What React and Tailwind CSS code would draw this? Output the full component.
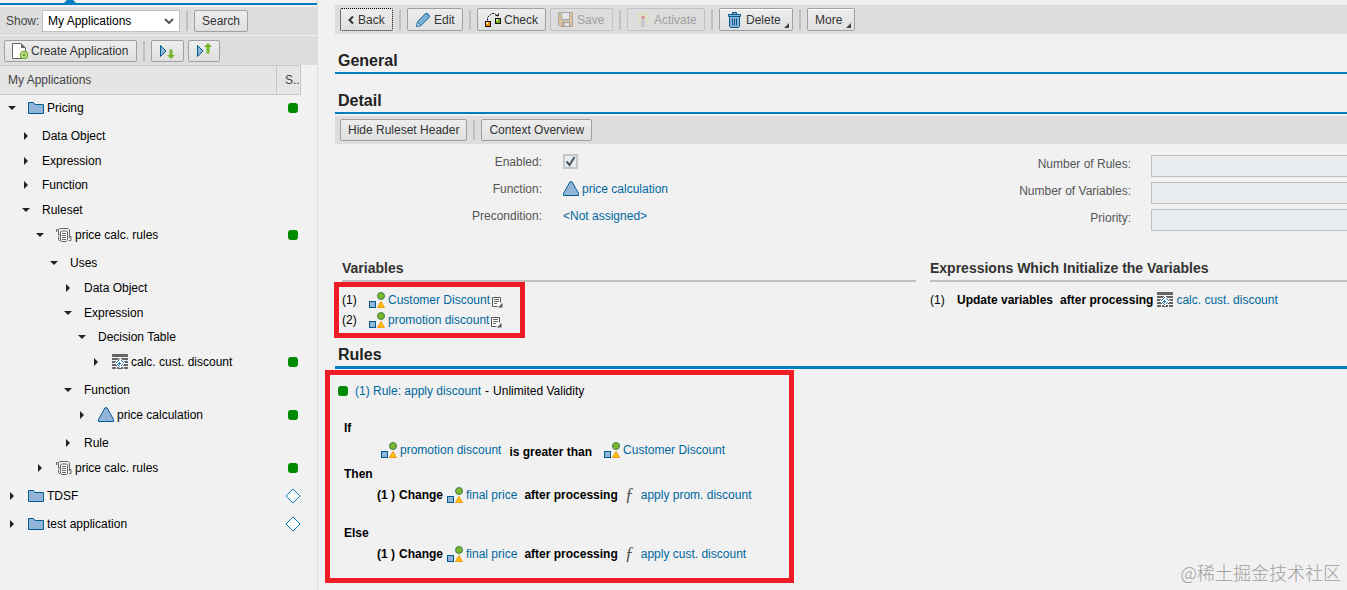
// Rule workbench: application tree on the left, ruleset detail on the right
import { clsx } from 'clsx';

/* ---------- icons ---------- */

function FolderIcon() {
  return (
    <svg width="16" height="16" viewBox="0 0 16 16" className="shrink-0">
      <path d="M.5 2.5h5l1.5 2h8.5v9H.5z" fill="#91b4d8" stroke="#005b8f" />
    </svg>
  );
}

function RulesetIcon() {
  return (
    <svg width="16" height="16" viewBox="0 0 16 16" className="shrink-0" fill="none" stroke="#666">
      <path d="M.5 5V2.500h2M2.500 2.500l1-1h8.500l1.500 1.500v8M2.500 3v5h2" />
      <path d="M4.500 13V5l1-1h5l1 1v8.500l-1 1h-5z" fill="#f8f8f8" />
      <path d="M2.500 9.500v3l1.500 1.500M13.500 9.500h1.500v4h-2" />
      <path d="M6 6.500h4M6 8.500h4M6 10.500h4M6 12.500h4" />
    </svg>
  );
}

function DecisionTableIcon() {
  return (
    <svg width="16" height="16" viewBox="0 0 16 16" className="shrink-0" shapeRendering="crispEdges">
      <path d="M0 0h16v3H0zM0 4h16v2H0zM0 7h16v2H0zM0 10h16v2H0zM0 13h4v2H0zM5 13h6v2H5zM12 13h4v2h-4z" fill="#666" />
      <path d="M7 4h2v1h1v1h1v1h1v1h1v2h-1v1h-1v1h-1v1H9v1H7v-1H6v-1H5v-1H4v-1H3V8h1V7h1V6h1V5h1z" fill="#fff" />
      <path d="M7 5h1v1H7zM6 6h1v1H6zM9 6h1v1H9zM5 7h1v1H5zM10 7h1v1h-1zM4 8h1v1H4zM11 8h1v1h-1zM5 10h1v1H5zM10 10h1v1h-1zM6 11h1v1H6zM9 11h1v1H9zM7 12h1v1H7zM7 8h1v3H7zM6 9h3v1H6z" fill="#1f78ad" />
    </svg>
  );
}

function FunctionIcon() {
  return (
    <svg width="16" height="16" viewBox="0 0 16 16" className="shrink-0">
      <path d="M7 .8h2l6.500 11.700v2H.5v-2z" fill="#91b4d8" stroke="#005b8f" />
    </svg>
  );
}

function VariableIcon() {
  return (
    <svg width="16" height="16" viewBox="0 0 16 16" className="shrink-0">
      <circle cx="12" cy="4" r="3.500" fill="#7cb82a" stroke="#3f8050" />
      <rect x=".5" y="9.500" width="6" height="6" fill="#91b4d8" stroke="#005b8f" />
      <path d="M12 9.500l3.500 6h-7z" fill="#fdc300" stroke="#f59a1b" />
    </svg>
  );
}

function NoteIcon() {
  return (
    <svg width="11" height="11" viewBox="0 0 11 11" className="shrink-0 self-end ml-[2px] mb-[2px]">
      <path d="M5.500 9.500h-5v-9h8v5" fill="#fff" stroke="#555" />
      <path d="M2 2.500h5M2 4.500h5M2 6.500h3" stroke="#666" />
      <path d="M10.500 6v4.500H6z" fill="#555" />
    </svg>
  );
}

function NewDocIcon() {
  return (
    <svg width="16" height="16" viewBox="0 0 16 16" className="shrink-0">
      <path d="M.5.5h8.500l4.500 4.500v10.500H.5z" fill="#fff" stroke="#666" />
      <path d="M9 .5V5h4.500z" fill="#666" />
      <circle cx="12" cy="12" r="3.500" fill="#fff" stroke="#6eaa14" strokeWidth="1.500" />
      <path d="M12 10v4M10 12h4" stroke="#6eaa14" strokeWidth="1.500" />
    </svg>
  );
}

function TransportIcon({ up }) {
  return (
    <svg width="16" height="16" viewBox="0 0 16 16" className="shrink-0">
      <path d="M1.500 2.500l5.500 5.500-5.500 5.500z" fill="#91b4d8" stroke="#005b8f" />
      <path d={up ? 'M12 0l4 4h-2.500v6.500h-3V4H8z' : 'M12 16l-4-4h2.500V6.500h3V12H16z'} fill="#76b82a" />
    </svg>
  );
}

function PencilIcon() {
  return (
    <svg width="16" height="16" viewBox="0 0 16 16" className="shrink-0">
      <path d="M1.500 14.500l1-4.500 8-8.500h2l2 2v1.500l-8.500 8.500z" fill="#5fa2cc" stroke="#1c6f9f" />
      <path d="M4 10.500l7-7.500M5.500 12l7-7.500" stroke="#a9cde6" />
      <path d="M1.500 14.500l1-4 3.500 3z" fill="#d7e8f2" stroke="#1c6f9f" strokeWidth=".7" />
    </svg>
  );
}

function CheckIcon() {
  return (
    <svg width="16" height="16" viewBox="0 0 16 16" className="shrink-0">
      <path d="M2.500 8.500V5.500L5 3l2-1.500h3l2.500 3" fill="none" stroke="#111" strokeDasharray="2 1" />
      <path d="M10.500 3.500h3v-2" fill="none" stroke="#111" />
      <rect x=".5" y="9.500" width="5" height="5" fill="#f28c00" stroke="#111" />
      <rect x="1" y="10" width="2" height="2" fill="#ffe08a" />
      <rect x="10.500" y="6.500" width="5" height="5" fill="#7db32a" stroke="#111" />
      <rect x="11" y="7" width="2" height="2" fill="#cde89b" />
    </svg>
  );
}

function SaveIcon() {
  return (
    <svg width="16" height="16" viewBox="0 0 16 16" className="shrink-0 opacity-50">
      <path d="M.5.5h14v14H2L.5 13z" fill="#e9a44f" stroke="#777" />
      <rect x="3.500" y=".5" width="8" height="7" fill="#f0f0f4" stroke="#777" />
      <path d="M3 8.500h9" stroke="#999" />
      <rect x="4.500" y="10.500" width="7" height="4" fill="#eee" stroke="#666" />
      <rect x="5" y="11" width="2" height="3.500" fill="#888" />
    </svg>
  );
}

function ActivateIcon() {
  return (
    <svg width="16" height="16" viewBox="0 0 16 16" className="shrink-0 opacity-60">
      <path d="M8 0v3M3.500 1.500l2.500 3M12.500 1.500L10 4.500M2 6.500h3M11 6.500h3M3.500 11l2.500-2.500M12.500 11L10 8.500" stroke="#e6e04a" />
      <rect x="6.500" y="4" width="3" height="3" fill="#dd5f5f" />
      <path d="M7 7v8M9 7v8" stroke="#8ea3bb" />
    </svg>
  );
}

function TrashIcon() {
  return (
    <svg width="16" height="16" viewBox="0 0 16 16" className="shrink-0" stroke="#005b8f">
      <path d="M5.500 2.500V.5h4v2M1.500 2.500h12v2h-12z" fill="#91b4d8" />
      <path d="M2.500 4.500h10v10l-1 1h-8l-1-1z" fill="#91b4d8" />
      <path d="M5.500 6.500v7M7.500 6.500v7M9.500 6.500v7" fill="none" />
    </svg>
  );
}

function BackIcon() {
  return (
    <svg width="7" height="10" viewBox="0 0 7 10" className="shrink-0" fill="none">
      <path d="M5 1.500L1.500 5 5 8.500" stroke="#333" strokeWidth="2" />
    </svg>
  );
}

// Small corner mark on buttons which open a menu
function MenuCorner() {
  return (
    <svg width="5" height="5" viewBox="0 0 5 5" className="absolute right-[3px] bottom-[2px]">
      <path d="M5 0v5H0z" fill="#444" />
    </svg>
  );
}

function StatusIcon({ status }) {
  return (
    <svg width="16" height="16" viewBox="0 0 16 16" className="shrink-0" role="img" aria-label={status}>
      {status === 'active' ? (
        <rect x="3" y="3" width="10" height="10" rx="3" fill="#008a00" />
      ) : (
        <path d="M8 1l7 7-7 7-7-7z" fill="#fff" stroke="#0a7fc0" />
      )}
    </svg>
  );
}

/* ---------- toolbar parts ---------- */

function Button({ icon, children, menu, disabled, focused, className }) {
  return (
    <button
      type="button"
      disabled={disabled}
      className={clsx(
        'relative flex items-center gap-[3px] pl-[7px] border rounded-[2px] text-xs whitespace-nowrap',
        menu ? 'pr-[11px]' : 'pr-[7px]',
        disabled ? 'border-[#c2c2c2] text-[#a0a0a0]' : 'text-[#333] bg-linear-to-b from-[#ededed] to-[#e0e0e0]',
        !disabled && (focused ? 'border-dotted border-black' : 'border-[#a0a0a0]'),
        menu && 'shadow-[inset_0_1px_0_#fff]',
        className
      )}
    >
      {icon}
      {children}
      {menu && <MenuCorner />}
    </button>
  );
}

function Separator() {
  return <div className="w-[2px] h-5 mx-1.5 bg-[#c0c0c0]" />;
}

function SectionTitle({ children }) {
  return (
    <h2 className="pt-4 pl-[3px] text-base leading-[22px] font-bold text-[#222] border-b-2 border-[#007cc0]">
      {children}
    </h2>
  );
}

function Link({ children }) {
  return <a href="#" className="text-[#00679e] whitespace-nowrap hover:underline">{children}</a>;
}

/* ---------- tree ---------- */

const tree = [
  { label: 'Pricing', level: 0, open: true, icon: FolderIcon, status: 'active', height: 'h-7' },
  { label: 'Data Object', level: 1, height: 'h-[25px]' },
  { label: 'Expression', level: 1, height: 'h-6' },
  { label: 'Function', level: 1, height: 'h-[25px]' },
  { label: 'Ruleset', level: 1, open: true, height: 'h-[25px]' },
  { label: 'price calc. rules', level: 2, open: true, icon: RulesetIcon, status: 'active', height: 'h-7' },
  { label: 'Uses', level: 3, open: true, height: 'h-[25px]' },
  { label: 'Data Object', level: 4, height: 'h-[25px]' },
  { label: 'Expression', level: 4, open: true, height: 'h-6' },
  { label: 'Decision Table', level: 5, open: true, height: 'h-[25px]' },
  { label: 'calc. cust. discount', level: 6, icon: DecisionTableIcon, status: 'active', height: 'h-7' },
  { label: 'Function', level: 4, open: true, height: 'h-[25px]' },
  { label: 'price calculation', level: 5, icon: FunctionIcon, status: 'active', height: 'h-7' },
  { label: 'Rule', level: 4, height: 'h-[25px]' },
  { label: 'price calc. rules', level: 2, icon: RulesetIcon, status: 'active', height: 'h-7' },
  { label: 'TDSF', level: 0, icon: FolderIcon, status: 'new', height: 'h-7' },
  { label: 'test application', level: 0, icon: FolderIcon, status: 'new', height: 'h-7' },
];

const INDENT = 14;

function TreeRow({ row }) {
  const Icon = row.icon;
  return (
    <tr className={row.height}>
      <td className="p-0 align-top">
        <div className="flex items-center pt-[3px] leading-5" style={{ paddingLeft: row.level * INDENT }}>
          <button type="button" aria-label={row.open ? 'Collapse' : 'Expand'} className="w-7 h-4 pl-2 shrink-0 flex items-center">
            <svg width="8" height="8" viewBox="0 0 8 8" fill="#222">
              <path d={row.open ? 'M0 2h8L4 6z' : 'M2 0l4 4-4 4z'} />
            </svg>
          </button>
          {Icon && <Icon />}
          <span className={clsx('whitespace-nowrap text-black', Icon && 'pl-[3px]')}>{row.label}</span>
        </div>
      </td>
      <td className="p-0 align-top">
        {row.status && (
          <div className="flex items-center h-[23px] pt-[3px] pl-2">
            <StatusIcon status={row.status} />
          </div>
        )}
      </td>
    </tr>
  );
}

function Sidebar() {
  return (
    <aside className="w-[318px] shrink-0 border-r border-[#dcdcdc]">
      <svg width="12" height="3" viewBox="0 0 12 3" className="ml-16">
        <path d="M0 3l3-3h6l3 3z" fill="#007cc0" />
      </svg>
      <div className="h-[2px] mb-[2px] bg-[#007cc0]" />

      <div className="flex items-center h-7 pl-1.5 bg-[#ddd]">
        <label htmlFor="show" className="w-9 text-[#444]">Show:</label>
        <div className="relative">
          <select id="show" className="appearance-none w-[138px] h-[22px] pl-[5px] bg-white border border-[#c0c0c0] text-black">
            <option>My Applications</option>
          </select>
          <svg width="10" height="6" viewBox="0 0 10 6" className="absolute right-1.5 top-2 pointer-events-none" fill="none">
            <path d="M1 1l4 4 4-4" stroke="#555" strokeWidth="2" />
          </svg>
        </div>
        <Separator />
        <Button className="h-[22px]">Search</Button>
      </div>

      <div className="flex items-center h-[29px] mt-px pl-1 bg-[#ddd]">
        <Button className="h-[22px] w-[133px]" icon={<NewDocIcon />}>Create Application</Button>
        <Separator />
        <Button className="h-[22px] w-[33px] mr-1" icon={<TransportIcon />} />
        <Button className="h-[22px]" icon={<TransportIcon up />} />
      </div>

      <table className="w-[301px] table-fixed border-collapse">
        <thead>
          <tr className="h-[29px] bg-[#e5e5e5] text-left text-[#444]">
            <th className="p-0 pl-2 pb-px font-normal border-y border-[#c8c8c8]">My Applications</th>
            <th className="w-6 p-0 pl-2 pb-px font-normal border border-[#c8c8c8] overflow-hidden">S..</th>
          </tr>
        </thead>
        <tbody>
          {tree.map((row, i) => <TreeRow key={i} row={row} />)}
        </tbody>
      </table>
    </aside>
  );
}

/* ---------- detail ---------- */

const counters = [
  { id: 'rules', label: 'Number of Rules:' },
  { id: 'variables', label: 'Number of Variables:' },
  { id: 'priority', label: 'Priority:' },
];

function Field({ label, htmlFor, children }) {
  return (
    <div className="flex items-center h-[27px]">
      <label htmlFor={htmlFor} className="w-[207px] mr-[21px] text-right text-[#555]">{label}</label>
      {children}
    </div>
  );
}

function Variable({ name }) {
  return (
    <span className="flex items-center gap-[3px] font-normal">
      <VariableIcon />
      <Link>{name}</Link>
    </span>
  );
}

function Change({ target, expression }) {
  return (
    <div className="flex items-center h-5 mt-px pl-[47px] font-bold whitespace-nowrap">
      <span className="mr-1">(1 )</span>
      <span className="mr-1">Change</span>
      <Variable name={target} />
      <span className="mx-[7px]">after processing</span>
      <span className="w-4 font-['Liberation_Serif',serif] text-lg leading-5 italic font-normal text-[#555]">ƒ</span>
      <span className="font-normal"><Link>{expression}</Link></span>
    </div>
  );
}

function RuleCard() {
  return (
    <div className="w-[469px] mt-px -ml-[10px] pt-1.5 pb-[14px] border-[5px] border-[#ee1c25] text-black">
      <div className="flex items-center h-5 pl-[5px]">
        <StatusIcon status="active" />
        <span className="ml-1"><Link>(1) Rule: apply discount</Link></span>
        <span className="mx-1">-</span>
        <span>Unlimited Validity</span>
      </div>

      <div className="mt-[17px] pl-[14px] leading-5 font-bold">If</div>
      <div className="flex items-end h-5 mt-[2px] pl-[51px] leading-5">
        <Variable name="promotion discount" />
        <span className="ml-2 mr-3 leading-4 font-bold">is greater than</span>
        <Variable name="Customer Discount" />
      </div>

      <div className="mt-1 pl-[14px] leading-5 font-bold">Then</div>
      <Change target="final price" expression="apply prom. discount" />

      <div className="mt-[18px] pl-[14px] leading-5 font-bold">Else</div>
      <Change target="final price" expression="apply cust. discount" />
    </div>
  );
}

function Detail() {
  return (
    <main className="flex-1 min-w-0 pt-[5px] pl-[17px]">
      <div className="flex items-center h-[29px] pl-[5px] bg-[#ddd]">
        <Button className="h-[23px] w-[53px]" focused icon={<BackIcon />}>Back</Button>
        <Separator />
        <Button className="h-[23px] w-14" icon={<PencilIcon />}>Edit</Button>
        <Separator />
        <Button className="h-[23px] w-[69px] mr-1" icon={<CheckIcon />}>Check</Button>
        <Button className="h-[23px] w-[63px]" disabled icon={<SaveIcon />}>Save</Button>
        <Separator />
        <Button className="h-[23px] w-[78px]" disabled icon={<ActivateIcon />}>Activate</Button>
        <Separator />
        <Button className="h-[23px] w-[74px]" menu icon={<TrashIcon />}>Delete</Button>
        <Separator />
        <Button className="h-[23px] w-12" menu>More</Button>
      </div>

      <SectionTitle>General</SectionTitle>
      <SectionTitle>Detail</SectionTitle>

      <div className="flex items-center h-7 mt-[2px] pl-[5px] bg-[#ddd]">
        <Button className="h-[22px]">Hide Ruleset Header</Button>
        <Separator />
        <Button className="h-[22px]">Context Overview</Button>
      </div>

      {/* Header fields */}
      <div className="grid grid-cols-[595fr_417fr]">
        <div className="pt-1">
          <Field label="Enabled:" htmlFor="enabled">
            <span className="grid">
              <input
                id="enabled"
                type="checkbox"
                defaultChecked
                className="appearance-none col-start-1 row-start-1 w-[15px] h-[15px] bg-[#e3edf5] border-2 border-[#c8c8c8]"
              />
              <svg width="15" height="15" viewBox="0 0 15 15" className="col-start-1 row-start-1 pointer-events-none" fill="none">
                <path d="M3.500 7.500l3 3.500 5-8" stroke="#555" strokeWidth="2" />
              </svg>
            </span>
          </Field>
          <Field label="Function:">
            <span className="flex items-center gap-[3px]">
              <FunctionIcon />
              <Link>price calculation</Link>
            </span>
          </Field>
          <Field label="Precondition:">
            <Link>&lt;Not assigned&gt;</Link>
          </Field>
        </div>
        <div className="pt-[11px]">
          {counters.map(({ id, label }) => (
            <div key={id} className="flex h-[27px]">
              <label htmlFor={id} className="w-[201px] mr-5 shrink-0 text-right leading-[18px] text-[#555]">{label}</label>
              <input id={id} type="text" readOnly className="flex-1 min-w-0 h-[22px] px-1 bg-[#e8ecef] border border-r-0 border-[#bfbfbf]" />
            </div>
          ))}
        </div>
      </div>

      {/* Variables and the expressions that fill them */}
      <div className="grid grid-cols-[595fr_417fr] mt-[22px]">
        <section className="pl-[7px] pr-[14px]">
          <h3 className="pb-[2px] text-sm leading-5 font-bold text-[#333] border-b-2 border-[#c0c0c0]">Variables</h3>
          <ol className="w-[191px] -ml-2 py-[3px] pl-[3px] border-[5px] border-[#ee1c25]">
            {['Customer Discount', 'promotion discount'].map((name, i) => (
              <li key={name} className="flex items-center h-5">
                <span className="w-[27px]">({i + 1})</span>
                <Variable name={name} />
                <NoteIcon />
              </li>
            ))}
          </ol>
        </section>
        <section>
          <h3 className="pb-[2px] text-sm leading-5 font-bold text-[#333] border-b-2 border-[#c0c0c0]">
            Expressions Which Initialize the Variables
          </h3>
          <div className="flex items-center h-5 mt-2 whitespace-nowrap">
            <span className="w-[27px]">(1)</span>
            <b className="mr-[7px]">Update variables</b>
            <b className="mr-1">after processing</b>
            <DecisionTableIcon />
            <span className="ml-[3px]"><Link>calc. cust. discount</Link></span>
          </div>
        </section>
      </div>

      <h2 className="pt-1.5 pl-[3px] text-base leading-[22px] font-bold text-[#222] border-b-[3px] border-[#007cc0]">Rules</h2>
      <RuleCard />
    </main>
  );
}

export default function App() {
  return (
    <div className="relative flex min-h-screen bg-[#f1f1f1] text-xs text-black font-['Liberation_Sans',Arial,sans-serif]">
      <Sidebar />
      <Detail />
      <div className="absolute right-1.5 bottom-1.5 text-lg leading-6 font-light text-[#a0a0a0] font-['Noto_Sans_CJK_SC',sans-serif]">
        @稀土掘金技术社区
      </div>
    </div>
  );
}
